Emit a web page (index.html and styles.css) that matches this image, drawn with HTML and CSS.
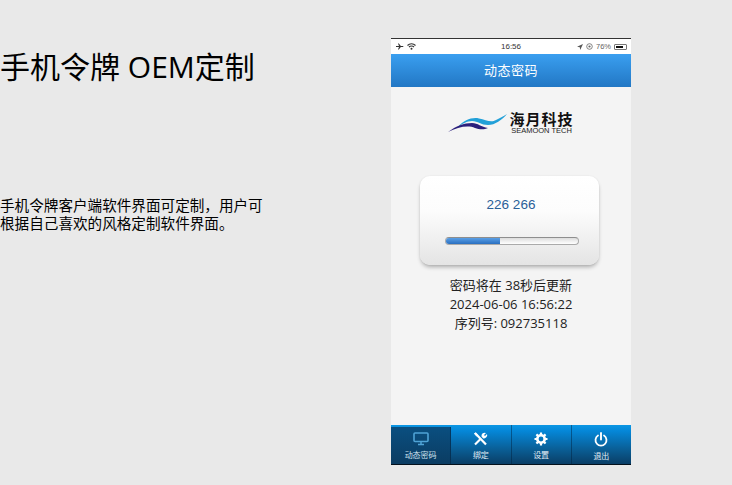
FILE: index.html
```html
<!DOCTYPE html>
<html lang="zh">
<head>
  <meta charset="UTF-8" />
  <title>手机令牌 OEM定制</title>
  <link rel="stylesheet" href="styles.css">
</head>
<body>
  <div class="slide">
    <div class="intro">
      <h1>手机令牌 OEM定制</h1>
      <p>手机令牌客户端软件界面可定制，用户可<br>根据自己喜欢的风格定制软件界面。</p>
    </div>

    <div class="phone">
      <div class="status-bar">
        <div class="status-left">
          <svg width="8" height="7" viewBox="0 0 9 7"><path d="M0 3h3.400L2.200 0h1L5.400 3H8a.6.6 0 0 1 0 1H5.400L3.200 7h-1l1.200-3H0z" fill="#333"/></svg>
          <svg width="9" height="7" viewBox="0 0 9 7"><path d="M.5 2.500a5.500 5.500 0 0 1 8 0M2 4a3.500 3.500 0 0 1 5 0" fill="none" stroke="#333" stroke-width="1.100"/><circle cx="4.500" cy="5.800" r="1" fill="#333"/></svg>
        </div>
        <span class="status-time">16:56</span>
        <div class="status-right">
          <svg width="6" height="6" viewBox="0 0 6 6"><path d="M6 0L0 2.800l2.800.4L3.200 6z" fill="#555"/></svg>
          <svg width="7" height="7" viewBox="0 0 7 7"><circle cx="3.500" cy="3.500" r="2.800" fill="none" stroke="#666" stroke-width=".8"/><circle cx="3.500" cy="3.500" r="1.100" fill="#666"/></svg>
          <span>76%</span>
          <div class="battery"><div class="battery-level"></div></div>
        </div>
      </div>

      <div class="app-header">动态密码</div>

      <div class="app-body">
        <div class="logo">
          <svg width="59" height="19" viewBox="0 0 59 19">
            <path d="M10 13C16 6 24 3 31 4.500 38 6 43 9 48 6 52 4 56 2 59 0 54 6 47 11 40 11 33 11 30 7 24 7 19 7 14 10 10 13z" fill="#22a0d8"/>
            <path d="M0 18C8 12 16 9 24 9 30 9 33 13 40 14 36 16 31 15.500 27 14 20 11 10 13 0 18z" fill="#2a1f7c"/>
          </svg>
          <div class="logo-text">
            <span class="logo-cn">海月科技</span>
            <span class="logo-en">SEAMOON TECH</span>
          </div>
        </div>

        <div class="token-card">
          <div class="token-code">226 266</div>
          <div class="progress"><div class="progress-bar"></div></div>
        </div>

        <div class="token-info">
          <div>密码将在 38秒后更新</div>
          <div>2024-06-06 16:56:22</div>
          <div>序列号: 092735118</div>
        </div>
      </div>

      <div class="tab-bar">
        <div class="tab active">
          <svg width="16" height="14" viewBox="0 0 16 14"><rect x="1" y="1" width="14" height="8.500" rx="1" fill="none" stroke="#4fa3d6" stroke-width="1.600"/><path d="M5 12.500h6M8 10v2" stroke="#4fa3d6" stroke-width="1.500"/></svg>
          <span>动态密码</span>
        </div>
        <div class="tab">
          <svg width="15" height="14" viewBox="0 0 15 14"><path d="M2 1l11 11.500" stroke="#fff" stroke-width="2.200"/><path d="M1 1.500L2.500.5 5 3 3.500 4.500z" fill="#fff"/><path d="M2 12.500L8 6.500" stroke="#fff" stroke-width="2.200"/><path d="M8.500 4.500a3.200 3.200 0 0 1 4.500-3.500L11 3l1 1 2-2a3.200 3.200 0 0 1-4 4.200z" fill="#fff"/></svg>
          <span>绑定</span>
        </div>
        <div class="tab">
          <svg width="14" height="14" viewBox="0 0 14 14"><circle cx="7" cy="7" r="3.700" fill="none" stroke="#fff" stroke-width="2.600"/><path d="M7 .5v13M.5 7h13M2.400 2.400l9.200 9.200M11.600 2.400l-9.200 9.200" stroke="#fff" stroke-width="2.200" stroke-dasharray="2.400 8.200 2.400"/></svg>
          <span>设置</span>
        </div>
        <div class="tab">
          <svg width="14" height="15" viewBox="0 0 14 15"><path d="M4 3.500a5.500 5.500 0 1 0 6 0" fill="none" stroke="#fff" stroke-width="1.800" stroke-linecap="round"/><path d="M7 1v6.500" stroke="#fff" stroke-width="1.900" stroke-linecap="round"/></svg>
          <span>退出</span>
        </div>
      </div>
    </div>
  </div>
</body>
</html>
```

FILE: styles.css
```css
html, body {
  margin: 0;
  padding: 0;
}

body {
  width: 732px;
  height: 485px;
  overflow: hidden;
  background-color: #e9e9e9;
  font-family: "Open Sans", "Noto Sans CJK SC", sans-serif;
}

.slide {
  display: flex;
  height: 100%;
}

.intro {
  width: 391px;
  color: #000;
}

.intro h1 {
  margin: 47px 0 0;
  font-size: 30px;
  font-weight: 400;
  line-height: 40px;
}

.intro p {
  margin: 109px 0 0;
  font-size: 14.6px;
  line-height: 18px;
}

.phone {
  display: flex;
  flex-direction: column;
  width: 240px;
  height: 427px;
  margin-top: 38px;
  background: #f4f4f4;
}

.status-bar {
  display: flex;
  align-items: center;
  justify-content: space-between;
  height: 15px;
  padding: 0 4px 0 5px;
  position: relative;
  border-top: 1px solid #333;
  background: #fff;
  font-size: 7px;
  color: #333;
  font-family: "Liberation Sans", sans-serif;
}

.status-left,
.status-right {
  display: flex;
  align-items: center;
  gap: 3px;
}

.status-time {
  position: absolute;
  left: 110px;
  font-size: 8px;
}

.status-right span {
  color: #666;
  font-size: 7.500px;
}

.battery {
  display: flex;
  width: 13px;
  height: 6px;
  padding: 1px;
  border: 1px solid #777;
  border-radius: 1px;
  box-sizing: border-box;
}

.battery-level {
  width: 76%;
  background: #111;
}

.app-header {
  height: 32px;
  padding-bottom: 1px;
  line-height: 32px;
  text-align: center;
  background: linear-gradient(#3a9ff0, #2277c4);
  color: #fff;
  font-size: 13px;
  letter-spacing: 0.5px;
}

.app-body {
  flex: 1;
  display: flex;
  flex-direction: column;
  align-items: center;
}

.logo {
  display: flex;
  align-items: flex-end;
  gap: 2px;
  height: 20px;
  margin-top: 26px;
}

.logo-text {
  display: flex;
  flex-direction: column;
  align-items: center;
  margin-bottom: -1px;
}

.logo-cn {
  font-size: 15px;
  font-weight: 700;
  line-height: 15px;
  color: #111;
  letter-spacing: 1px;
}

.logo-en {
  font-family: "Liberation Sans", sans-serif;
  font-size: 7.500px;
  line-height: 7px;
  color: #222;
  white-space: nowrap;
}

.token-card {
  width: 179px;
  height: 89px;
  margin: 43px 3px 0 0;
  box-sizing: border-box;
  padding-top: 21px;
  border-radius: 10px;
  background: linear-gradient(#fff, #fcfcfc 40%, #e4e4e4);
  box-shadow: 0 3px 4px -1px rgba(0, 0, 0, 0.3), 0 0 2px rgba(0, 0, 0, 0.08);
}

.token-code {
  padding-left: 3px;
  text-align: center;
  font-family: "Liberation Sans", sans-serif;
  font-size: 13.500px;
  line-height: 16px;
  color: #2a6098;
}

.progress {
  width: 134px;
  height: 8px;
  margin: 24px 20px 0 25px;
  box-sizing: border-box;
  border: 1px solid #aaa;
  border-top-color: #8e8e8e;
  border-radius: 4px;
  background: linear-gradient(#ddd, #fff);
  overflow: hidden;
}

.progress-bar {
  width: 41%;
  height: 100%;
  background: linear-gradient(#5a9fe6, #2a6fc0);
}

.token-info {
  margin-top: 11px;
  text-align: center;
  font-size: 13px;
  line-height: 19px;
  color: #222;
}

.tab-bar {
  display: flex;
  height: 40px;
  border-bottom: 1px solid #04111c;
  box-sizing: border-box;
  background: linear-gradient(#0c97e4 0, #0587d8 15%, #0a5c92 65%, #0a3e66);
}

.tab {
  flex: 1;
  display: flex;
  flex-direction: column;
  align-items: center;
  gap: 3px;
  padding-top: 7px;
  border-right: 1px solid rgba(0, 30, 60, 0.45);
  color: #e4eef5;
  font-size: 8px;
  line-height: 12px;
}

.tab:last-child {
  border-right: none;
}

.tab.active {
  margin-top: 2px;
  padding-top: 5px;
  background: linear-gradient(#0a4f80, #0b3c62);
  color: #cfe2ef;
}
```
